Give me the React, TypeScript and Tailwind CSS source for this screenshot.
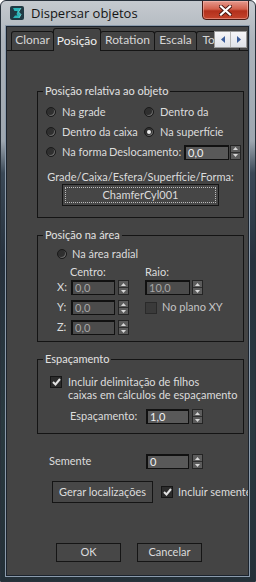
import type { ReactNode } from 'react';

const Radio = ({ on }: { on?: boolean }) => (
  <div className="flex h-[10px] w-[10px] shrink-0 items-center justify-center rounded-full border border-[#1a1a1a] bg-[#2f2f2f] shadow-[inset_-1px_-1px_0_#6a6a6a]">
    {on && <div className="h-[4px] w-[4px] rounded-full bg-[#ececec]" />}
  </div>
);

const Check = ({ on, dim }: { on?: boolean; dim?: boolean }) => (
  <div className={`flex h-[12px] w-[12px] shrink-0 items-center justify-center border ${dim ? 'border-[#2a2a2a] bg-[#3a3a3a]' : 'border-[#161616] bg-[#2c2c2c]'}`}>
    {on && (
      <svg width="9" height="8" viewBox="0 0 9 8">
        <path d="M1 4 L3.5 6.5 L8 1" fill="none" stroke="#e2e2e2" strokeWidth="2" />
      </svg>
    )}
  </div>
);

const Spin = () => (
  <div className="flex h-[15px] w-[11px] shrink-0 flex-col border border-[#242424] bg-[#5c5c5c]">
    <div className="flex flex-1 items-center justify-center border-b border-[#2e2e2e]">
      <svg width="5" height="3" viewBox="0 0 5 3"><path d="M2.5 0 L5 3 L0 3Z" fill="#d8d8d8" /></svg>
    </div>
    <div className="flex flex-1 items-center justify-center">
      <svg width="5" height="3" viewBox="0 0 5 3"><path d="M0 0 L5 0 L2.5 3Z" fill="#d8d8d8" /></svg>
    </div>
  </div>
);

const Field = ({ value, w, dim }: { value: string; w: string; dim?: boolean }) => (
  <div
    className={`h-[15px] shrink-0 border-t-2 border-l-2 border-r border-b border-[#111111] pl-[2px] leading-[12px] ${w} ${
      dim ? 'bg-[#4b4b4b] text-[#a6a6a6]' : 'bg-[#595959] text-[#f2f2f2]'
    }`}
  >
    {value}
  </div>
);

const Group = ({ title, className, children }: { title: string; className: string; children: ReactNode }) => (
  <div className={`flex flex-col border border-[#141414] ${className}`}>
    <div className="-mt-[8px] ml-[5px] w-fit bg-[#444444] px-[2px] leading-[14px] text-[#e2e2e2]">{title}</div>
    {children}
  </div>
);

const Tab = ({ label, w, active }: { label: string; w: string; active?: boolean }) => (
  <div
    className={`-ml-px flex shrink-0 items-end justify-center rounded-t-[3px] border border-[#151515] bg-[#444444] pb-[3px] text-[12px] leading-[14px] ${w} ${
      active ? 'relative z-10 -mb-px h-[23px] border-b-0 text-[#f0f0f0]' : 'h-[19px] border-b-0 text-[#d6d6d6]'
    }`}
  >
    {label}
  </div>
);

export default function App() {
  return (
    <div className="flex h-[582px] w-[256px] flex-col overflow-hidden rounded-t-[6px] border border-[#28313b] bg-[linear-gradient(180deg,#c5cacf_0px,#adb4bb_40px,#9ea7b0_140px,#3a4856_172px,#26313d_260px,#2a3a40_420px,#243038_100%)] font-['Lato',sans-serif] text-[11px] text-[#dcdcdc]">
      {/* title bar */}
      <div className="flex h-[25px] shrink-0 items-start">
        <svg className="ml-[8px] mt-[4px]" width="16" height="16" viewBox="0 0 16 16">
          <rect x="1" y="1" width="14" height="14" rx="2" fill="#1f3a44" />
          <path d="M4 3 H12 L9.5 7 L12 9.5 L10 13 H4 L6 10.5 H8.5 L7.5 9 L8.5 6 H5.5Z" fill="#29b5b8" />
          <path d="M12 3 L9.5 7 L12 9.5 L10 13" fill="none" stroke="#7fe0e0" strokeWidth="0.8" />
        </svg>
        <div className="ml-[6px] mt-[4px] font-['Open_Sans',sans-serif] text-[13px] leading-[17px] text-[#151515]">Dispersar objetos</div>
        <div className="-mt-px ml-auto mr-[6px] flex h-[20px] w-[47px] items-center justify-center rounded-b-[4px] border border-[#4a1a14] bg-[linear-gradient(180deg,#e59a8e_0%,#d2604c_45%,#b3301c_55%,#c4442c_100%)] shadow-[inset_0_0_0_1px_rgba(255,200,190,0.45)]">
          <svg width="13" height="11" viewBox="0 0 13 11">
            <path d="M2 1.5 L11 9.5 M11 1.5 L2 9.5" stroke="#4a1610" strokeWidth="4" strokeLinecap="square" />
            <path d="M2 1.5 L11 9.5 M11 1.5 L2 9.5" stroke="#ffffff" strokeWidth="2.2" strokeLinecap="square" />
          </svg>
        </div>
      </div>

      {/* client area */}
      <div className="mb-[5px] ml-[5px] mr-[6px] flex flex-1 flex-col overflow-hidden border border-[#1b232d] bg-[#444444] shadow-[0_0_0_1px_#8b9bac]">
        {/* tabs */}
        <div className="relative flex h-[24px] shrink-0 items-end border-b border-[#151515] pl-[5px]">
          <Tab label="Clonar" w="w-[43px]" />
          <Tab label="Posição" w="w-[48px]" active />
          <Tab label="Rotation" w="w-[55px]" />
          <Tab label="Escala" w="w-[43px]" />
          <Tab label="Todos" w="w-[44px]" />
          <div className="absolute right-[1px] top-[4px] flex h-[17px] w-[33px] border border-[#9a9a9a] bg-[#f0f0f2]">
            <div className="flex flex-1 items-center justify-center border-r border-[#b4b4b4] bg-[linear-gradient(180deg,#f6f6f8,#dfe2e8)]">
              <svg width="4" height="7" viewBox="0 0 4 7"><path d="M4 0 L0 3.5 L4 7Z" fill="#3c5d9a" /></svg>
            </div>
            <div className="flex flex-1 items-center justify-center bg-[linear-gradient(180deg,#f6f6f8,#dfe2e8)]">
              <svg width="4" height="7" viewBox="0 0 4 7"><path d="M0 0 L4 3.5 L0 7Z" fill="#3c5d9a" /></svg>
            </div>
          </div>
        </div>

        {/* panel */}
        <div className="flex flex-col pl-[30px] pr-[4px]">
          <Group title="Posição relativa ao objeto" className="mt-[40px] pb-[11px]">
            <div className="mt-[4px] flex flex-col pl-[8px]">
              <div className="flex h-[20px] items-center">
                <div className="flex w-[98px] items-center gap-[6px]"><Radio />Na grade</div>
                <div className="flex items-center gap-[6px]"><Radio />Dentro da</div>
              </div>
              <div className="flex h-[20px] items-center">
                <div className="flex w-[98px] items-center gap-[6px] whitespace-nowrap"><Radio />Dentro da caixa</div>
                <div className="flex items-center gap-[6px]"><Radio on />Na superfície</div>
              </div>
              <div className="flex h-[20px] items-center">
                <div className="flex w-[63px] items-center gap-[6px] whitespace-nowrap"><Radio />Na forma</div>
                <div className="w-[75px] whitespace-nowrap">Deslocamento:</div>
                <Field value="0,0" w="w-[45px]" />
                <div className="ml-px"><Spin /></div>
              </div>
            </div>
            <div className="mt-[8px] text-center leading-[14px]">Grade/Caixa/Esfera/Superfície/Forma:</div>
            <div className="mx-auto flex h-[22px] w-[157px] border border-[#151515] bg-[#464646] p-[2px]">
              <div className="flex flex-1 items-center justify-center border border-dotted border-[#bdbdbd]">ChamferCyl001</div>
            </div>
          </Group>

          <Group title="Posição na área" className="mt-[17px] pb-[6px]">
            <div className="mt-[4px] flex h-[16px] items-center gap-[5px] pl-[19px]"><Radio />Na área radial</div>
            <div className="mt-[3px] flex h-[14px] items-center pl-[32px] leading-[14px]">
              <div className="w-[75px]">Centro:</div>
              <div>Raio:</div>
            </div>
            <div className="mt-px flex flex-col gap-[5px] pl-[19px]">
              <div className="flex h-[15px] items-center">
                <div className="w-[14px]">X:</div>
                <Field value="0,0" w="w-[44px]" dim />
                <div className="ml-[3px]"><Spin /></div>
                <div className="ml-[16px]"><Field value="10,0" w="w-[45px]" dim /></div>
                <div className="ml-[2px]"><Spin /></div>
              </div>
              <div className="flex h-[15px] items-center">
                <div className="w-[14px]">Y:</div>
                <Field value="0,0" w="w-[44px]" dim />
                <div className="ml-[3px]"><Spin /></div>
                <div className="ml-[16px] flex items-center gap-[5px] text-[#c4c4c4]"><Check dim />No plano XY</div>
              </div>
              <div className="flex h-[15px] items-center">
                <div className="w-[14px]">Z:</div>
                <Field value="0,0" w="w-[44px]" dim />
                <div className="ml-[3px]"><Spin /></div>
              </div>
            </div>
          </Group>

          <Group title="Espaçamento" className="mt-[17px] pb-[9px]">
            <div className="mt-[10px] flex items-start gap-[6px] pl-[12px]">
              <Check on />
              <div className="-mt-px whitespace-nowrap leading-[13px]">
                Incluir delimitação de filhos
                <br />
                caixas em cálculos de espaçamento
              </div>
            </div>
            <div className="mt-[8px] flex h-[15px] items-center pl-[32px]">
              <div className="w-[76px]">Espaçamento:</div>
              <Field value="1,0" w="w-[43px]" />
              <div className="ml-[3px]"><Spin /></div>
            </div>
          </Group>

          <div className="mt-[20px] flex h-[15px] items-center pl-[12px]">
            <div className="w-[97px]">Semente</div>
            <Field value="0" w="w-[43px]" />
            <div className="ml-[3px]"><Spin /></div>
          </div>

          <div className="mt-[12px] flex items-center pl-[15px]">
            <div className="flex h-[22px] w-[101px] shrink-0 items-center justify-center whitespace-nowrap border border-[#151515] bg-[#474747]">Gerar localizações</div>
            <div className="ml-[8px] flex shrink-0 items-center gap-[5px] whitespace-nowrap"><Check on />Incluir semente</div>
          </div>

          <div className="mt-[40px] flex gap-[16px] pl-[19px]">
            <div className="flex h-[19px] w-[65px] items-center justify-center border border-[#151515] bg-[#474747]">OK</div>
            <div className="flex h-[19px] w-[65px] items-center justify-center border border-[#151515] bg-[#474747]">Cancelar</div>
          </div>
        </div>
      </div>
    </div>
  );
}
